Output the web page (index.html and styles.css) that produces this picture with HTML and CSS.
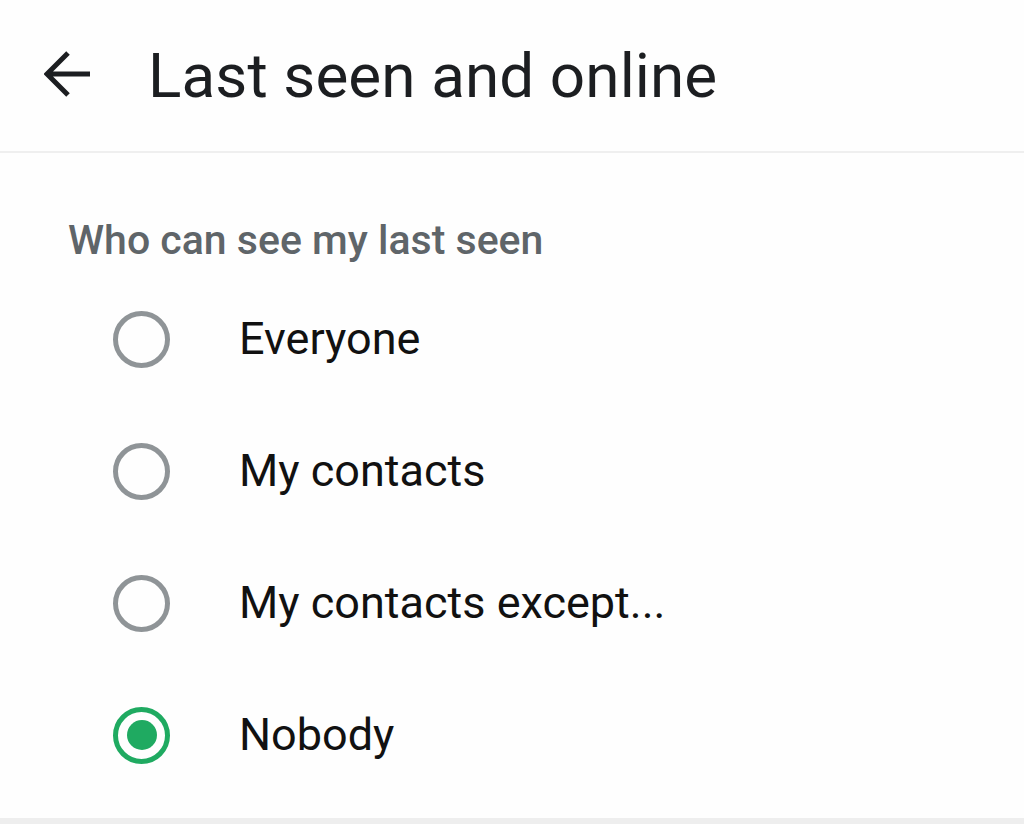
FILE: index.html
```html
<!DOCTYPE html>
<html lang="en">
<head>
<meta charset="utf-8">
<title>Last seen and online</title>
<link rel="stylesheet" href="styles.css">
</head>
<body>
<div class="screen">
  <header class="appbar">
    <button class="back" aria-label="Back">
      <svg viewBox="0 0 48 48" width="48" height="48" aria-hidden="true">
        <path d="M46 24H4M24 3L3 24l21 21" fill="none" stroke="#1c1e21" stroke-width="5" stroke-linecap="butt" stroke-linejoin="miter"/>
      </svg>
    </button>
    <h1 class="title">Last seen and online</h1>
  </header>
  <main class="content">
    <h2 class="section-label">Who can see my last seen</h2>
    <ul class="options">
      <li class="option"><span class="radio"></span><span class="option-text">Everyone</span></li>
      <li class="option"><span class="radio"></span><span class="option-text">My contacts</span></li>
      <li class="option"><span class="radio"></span><span class="option-text">My contacts except...</span></li>
      <li class="option"><span class="radio radio--checked"></span><span class="option-text">Nobody</span></li>
    </ul>
  </main>
  <div class="bottom-divider"></div>
</div>
</body>
</html>
```
FILE: styles.css
```css
html, body {
  margin: 0;
  padding: 0;
  background: #fefefe;
}
body {
  font-family: Roboto, "Liberation Sans", sans-serif;
  color: #111;
}
.screen {
  width: 1024px;
  height: 824px;
  display: flex;
  flex-direction: column;
  overflow: hidden;
}
.appbar {
  height: 151px;
  flex: none;
  display: flex;
  align-items: center;
  border-bottom: 2px solid #efefef;
  box-sizing: content-box;
}
.back {
  border: 0;
  background: none;
  padding: 0;
  margin: 0 0 4px 44px;
  width: 48px;
  height: 48px;
  display: flex;
}
.title {
  margin: 0 0 0 56px;
  font-size: 62px;
  font-weight: 400;
  color: #1c1e21;
  line-height: 1;
  letter-spacing: 0.1px;
}
.content {
  flex: 1;
  padding: 62px 0 0 0;
}
.section-label {
  margin: 0 0 8px 68px;
  font-size: 41px;
  line-height: 50px;
  font-weight: 500;
  color: #5f6569;
}
.options {
  list-style: none;
  margin: 0;
  padding: 0;
}
.option {
  height: 132px;
  display: flex;
  align-items: center;
  padding-left: 113px;
}
.radio {
  width: 57px;
  height: 57px;
  box-sizing: border-box;
  border: 5.5px solid #8f9497;
  border-radius: 50%;
  flex: none;
  display: flex;
  align-items: center;
  justify-content: center;
}
.radio--checked {
  border-color: #1faa61;
}
.radio--checked::after {
  content: "";
  width: 30px;
  height: 30px;
  border-radius: 50%;
  background: #1faa61;
}
.option-text {
  margin-left: 69px;
  font-size: 45px;
  line-height: 54px;
  color: #111;
}
.bottom-divider {
  height: 6px;
  flex: none;
  background: #eeeeee;
}
```
